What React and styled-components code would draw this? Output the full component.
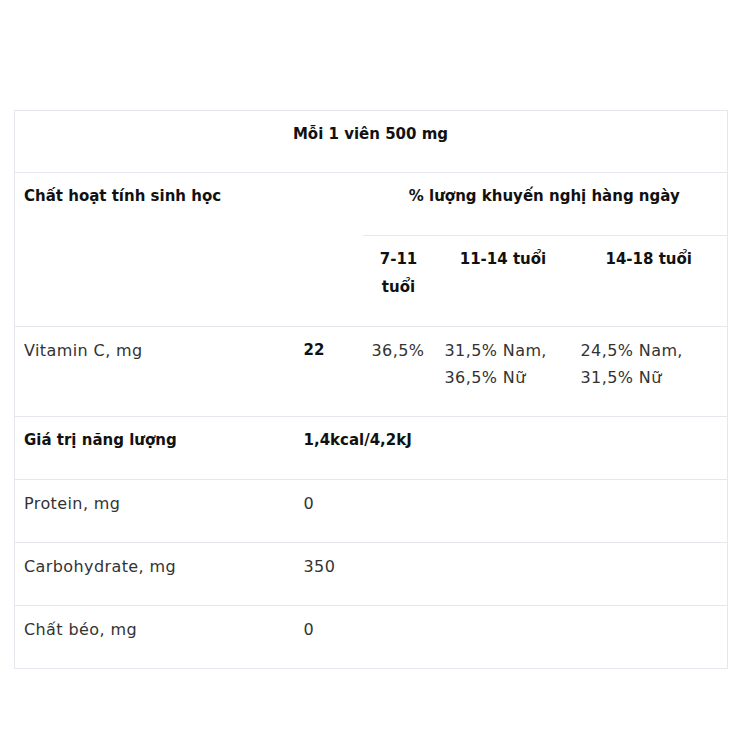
import React from "react";
import styled, { createGlobalStyle } from "styled-components";

const GlobalStyle = createGlobalStyle`
  html, body {
    margin: 0;
    padding: 0;
    background: #ffffff;
  }
  body {
    font-family: "DejaVu Sans", "Noto Sans", sans-serif;
  }
`;

const Page = styled.div`
  padding: 110px 23px 40px 14px;
`;

const Table = styled.table`
  width: 713px;
  border-collapse: collapse;
  table-layout: fixed;
  border: 1px solid #e4e7eb;
  line-height: 27px;
  color: #333333;
`;

const Row = styled.tr`
  border-top: 1px solid #e4e7eb;
`;

const Th = styled.th`
  font-size: 15px;
  font-weight: bold;
  color: #111111;
  line-height: ${(p) => (p.$line ? "27.5px" : "27px")};
  text-align: ${(p) => p.$align || "left"};
  vertical-align: top;
  padding: 10px 10px ${(p) => (p.$first ? "24px" : "25px")} 9px;
  border-top: ${(p) => (p.$line ? "1px solid #e4e7eb" : "none")};
`;

const Td = styled.td`
  font-size: ${(p) => (p.$bold ? "15px" : "16px")};
  letter-spacing: ${(p) => (p.$bold ? "0" : "0.4px")};
  text-align: left;
  vertical-align: top;
  padding: 10px 10px 25px 9px;
  font-weight: ${(p) => (p.$bold ? "bold" : "normal")};
  color: ${(p) => (p.$bold ? "#111111" : "#333333")};
`;

const SubHead = styled.tr``;

const App = () => {
  const body = [
    { name: "Protein, mg", value: "0" },
    { name: "Carbohydrate, mg", value: "350" },
    { name: "Chất béo, mg", value: "0" },
  ];

  return (
    <>
      <GlobalStyle />
      <Page>
        <Table>
          <colgroup>
            <col style={{ width: 280 }} />
            <col style={{ width: 68 }} />
            <col style={{ width: 73 }} />
            <col style={{ width: 136 }} />
            <col style={{ width: 156 }} />
          </colgroup>
          <tbody>
            <Row>
              <Th colSpan={5} $align="center" $first>
                Mỗi 1 viên 500 mg
              </Th>
            </Row>
            <Row>
              <Th rowSpan={2}>Chất hoạt tính sinh học</Th>
              <Th rowSpan={2}></Th>
              <Th colSpan={3} $align="center">
                % lượng khuyến nghị hàng ngày
              </Th>
            </Row>
            <SubHead>
              <Th $align="center" $line>
                7-11 tuổi
              </Th>
              <Th $align="center" $line>
                11-14 tuổi
              </Th>
              <Th $align="center" $line>
                14-18 tuổi
              </Th>
            </SubHead>
            <Row>
              <Td>Vitamin C, mg</Td>
              <Td $bold>22</Td>
              <Td>36,5%</Td>
              <Td>
                31,5% Nam,
                <br />
                36,5% Nữ
              </Td>
              <Td>
                24,5% Nam,
                <br />
                31,5% Nữ
              </Td>
            </Row>
            <Row>
              <Td $bold>Giá trị năng lượng</Td>
              <Td $bold colSpan={4}>
                1,4kcal/4,2kJ
              </Td>
            </Row>
            {body.map((item) => (
              <Row key={item.name}>
                <Td>{item.name}</Td>
                <Td colSpan={4}>{item.value}</Td>
              </Row>
            ))}
          </tbody>
        </Table>
      </Page>
    </>
  );
};

export default App;
